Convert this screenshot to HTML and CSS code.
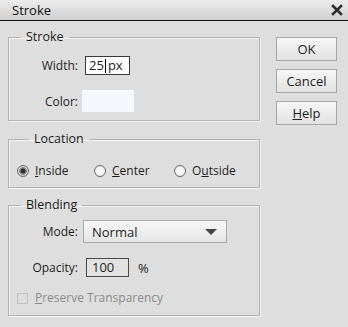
FILE: index.html
```html
<!DOCTYPE html>
<html lang="en">
<head>
    <meta charset="UTF-8">
    <title>Stroke</title>
    <link rel="stylesheet" href="styles.css">
</head>
<body>
    <header class="titlebar">
        <span class="title">Stroke</span>
        <svg class="close" width="12" height="12" viewBox="0 0 12 12">
            <path d="M2 2 L10 10 M10 2 L2 10" stroke="#2e2e2e" stroke-width="2.6" stroke-linecap="square"/>
        </svg>
    </header>
    <main class="dialog">
        <div class="groups">
            <fieldset class="group stroke-group">
                <legend>Stroke</legend>
                <div class="field-grid">
                    <label class="field-label">Width:</label>
                    <div class="text-input width-input">25<span class="caret"></span><span class="unit">px</span></div>
                    <label class="field-label color-label">Color:</label>
                    <div class="swatch"></div>
                </div>
            </fieldset>

            <fieldset class="group location-group">
                <legend>Location</legend>
                <div class="radio-row">
                    <div class="option"><span class="radio checked"></span><span><u>I</u>nside</span></div>
                    <div class="option"><span class="radio"></span><span><u>C</u>enter</span></div>
                    <div class="option"><span class="radio"></span><span>O<u>u</u>tside</span></div>
                </div>
            </fieldset>

            <fieldset class="group blending-group">
                <legend>Blending</legend>
                <div class="field-grid blend-grid">
                    <label class="field-label">Mode:</label>
                    <div class="select">Normal<span class="arrow"></span></div>
                    <label class="field-label">Opacity:</label>
                    <div class="opacity-row">
                        <div class="text-input opacity-input">100</div>
                        <span class="percent">%</span>
                    </div>
                </div>
                <div class="check-row">
                    <span class="checkbox"></span><span><u>P</u>reserve Transparency</span>
                </div>
            </fieldset>
        </div>

        <div class="buttons">
            <button class="btn">OK</button>
            <button class="btn">Cancel</button>
            <button class="btn"><u>H</u>elp</button>
        </div>
    </main>
</body>
</html>
```

FILE: styles.css
```css
body {
    margin: 0;
    font-family: 'Open Sans', 'Noto Sans', sans-serif;
    font-size: 12px;
    color: #1e1e1e;
    background: #dedede;
    width: 348px;
    height: 327px;
    overflow: hidden;
}

.titlebar {
    height: 20px;
    border-bottom: 1px solid #161616;
    background: linear-gradient(#ececec, #d0d0d0);
    display: flex;
    align-items: center;
    justify-content: space-between;
    padding: 0 5px 0 12px;
}
.title {
    font-size: 13px;
    color: #111;
}
.close {
    display: block;
}

.dialog {
    display: flex;
    padding-left: 8px;
}
.groups {
    width: 252px;
    display: flex;
    flex-direction: column;
}

.group {
    margin: 0;
    border: 1px solid #b3b3b3;
    box-shadow: 1px 1px 0 #f3f3f3, inset 1px 1px 0 #f3f3f3;
    padding: 0;
    min-width: 0;
}
.group legend {
    margin-left: 12px;
    padding: 0 5px;
    line-height: 16px;
    font-size: 12.5px;
    color: #1a1a1a;
}

.stroke-group {
    margin-top: 8px;
    padding-top: 11px;
    padding-bottom: 8px;
}
.location-group {
    margin-top: 10px;
    padding: 16px 0 8px 8px;
}
.blending-group {
    margin-top: 9px;
    padding-top: 7px;
    padding-bottom: 9px;
}

.field-grid {
    display: grid;
    grid-template-columns: 69px auto;
    column-gap: 7px;
    row-gap: 15px;
    align-items: center;
}
.field-label {
    text-align: right;
    font-size: 12px;
}

.text-input {
    box-sizing: border-box;
    height: 19px;
    border: 1px solid #3a3a3a;
    background: #fff;
    font-size: 13px;
    line-height: 17px;
    padding-left: 3px;
    display: flex;
    align-items: center;
}
.width-input {
    width: 45px;
}
.caret {
    width: 1px;
    height: 14px;
    background: #000;
    margin: 0 1px;
}
.unit {
    margin-left: 1px;
}
.swatch {
    width: 52px;
    height: 22px;
    margin-left: -3px;
    background: #f4f8fc;
}

.radio-row {
    display: grid;
    grid-template-columns: 77px 80px auto;
}
.option {
    display: flex;
    align-items: center;
    gap: 6px;
    line-height: 16px;
    font-size: 12px;
}
.radio {
    box-sizing: border-box;
    width: 12px;
    height: 12px;
    border-radius: 50%;
    border: 1px solid #666;
    background: radial-gradient(circle, #ffffff, #e6e6e6);
}
.radio.checked {
    background: radial-gradient(circle, #2e2e2e 0 2.2px, #8e8e8e 2.8px 3.6px, #dcdcdc 4.2px);
}

.select {
    box-sizing: border-box;
    width: 144px;
    height: 23px;
    margin-left: -2px;
    border: 1px solid #a9a9a9;
    background: linear-gradient(#f7f7f7, #e5e5e5);
    display: flex;
    align-items: center;
    justify-content: space-between;
    padding: 0 9px 0 8px;
    font-size: 13px;
}
.arrow {
    width: 0;
    height: 0;
    border-left: 6px solid transparent;
    border-right: 6px solid transparent;
    border-top: 6px solid #444;
}
.opacity-row {
    display: flex;
    align-items: center;
    gap: 9px;
    margin-left: 1px;
}
.opacity-input {
    width: 43px;
    padding-left: 5px;
    background: #e2e2e2;
    border-color: #4a4a4a;
}
.percent {
    font-size: 13px;
}

.check-row {
    display: flex;
    align-items: center;
    gap: 7px;
    margin: 13px 0 0 8px;
    line-height: 16px;
    font-size: 12px;
    color: #8a8a8a;
}
.checkbox {
    box-sizing: border-box;
    width: 11px;
    height: 11px;
    border: 1px solid #c2c2c2;
}

.buttons {
    display: flex;
    flex-direction: column;
    gap: 8px;
    margin: 16px 0 0 16px;
}
.btn {
    box-sizing: border-box;
    width: 61px;
    height: 24px;
    padding: 0;
    border: 1px solid #a6a6a6;
    border-radius: 0;
    background: linear-gradient(#f6f6f6, #e2e2e2);
    font-family: inherit;
    font-size: 13px;
    color: #1e1e1e;
}
```
